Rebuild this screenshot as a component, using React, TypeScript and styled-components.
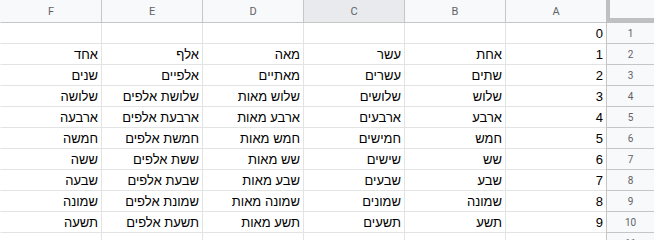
import React from "react";
import styled, { createGlobalStyle } from "styled-components";

const GlobalStyle = createGlobalStyle`
  html, body {
    margin: 0;
    padding: 0;
    background: #ffffff;
  }
  #root {
    width: 654px;
    height: 240px;
    overflow: hidden;
  }
`;

const Sheet = styled.div`
  direction: rtl;
  display: grid;
  grid-template-columns: 48px repeat(6, 101px);
  grid-auto-rows: 21px;
  grid-template-rows: 23px;
  width: 654px;
  background: #ffffff;
`;

const Corner = styled.div`
  background: #f8f9fa;
  border-left: 4px solid #c0c0c0;
  border-bottom: 5px solid #c0c0c0;
`;

const ColHeader = styled.div<{ $selected?: boolean; $edge?: boolean }>`
  display: flex;
  align-items: center;
  justify-content: center;
  background: ${(p) => (p.$selected ? "#e8eaed" : "#f8f9fa")};
  border-left: 1px solid ${(p) => (p.$edge ? "transparent" : "#c4c7c5")};
  border-bottom: 1px solid #c4c7c5;
  font-family: Roboto, "Liberation Sans", sans-serif;
  font-size: 11px;
  color: #5f6368;
`;

const RowHeader = styled.div`
  display: flex;
  align-items: center;
  justify-content: center;
  background: #f8f9fa;
  border-left: 1px solid #c4c7c5;
  border-bottom: 1px solid #c4c7c5;
  font-family: Roboto, "Liberation Sans", sans-serif;
  font-size: 10px;
  color: #5f6368;
`;

const Cell = styled.div<{ $edge?: boolean }>`
  display: flex;
  align-items: center;
  justify-content: flex-start;
  padding: 1px 3px 0;
  border-left: 1px solid ${(p) => (p.$edge ? "transparent" : "#e2e3e3")};
  border-bottom: 1px solid #e2e3e3;
  font-family: "Liberation Sans", Arial, sans-serif;
  font-size: 13px;
  color: #000000;
  white-space: nowrap;
  overflow: hidden;
`;

const columns = ["A", "B", "C", "D", "E", "F"];

const rows: string[][] = [
  ["0", "", "", "", "", ""],
  ["1", "אחת", "עשר", "מאה", "אלף", "אחד"],
  ["2", "שתים", "עשרים", "מאתיים", "אלפיים", "שנים"],
  ["3", "שלוש", "שלושים", "שלוש מאות", "שלושת אלפים", "שלושה"],
  ["4", "ארבע", "ארבעים", "ארבע מאות", "ארבעת אלפים", "ארבעה"],
  ["5", "חמש", "חמישים", "חמש מאות", "חמשת אלפים", "חמשה"],
  ["6", "שש", "שישים", "שש מאות", "ששת אלפים", "ששה"],
  ["7", "שבע", "שבעים", "שבע מאות", "שבעת אלפים", "שבעה"],
  ["8", "שמונה", "שמונים", "שמונה מאות", "שמונת אלפים", "שמונה"],
  ["9", "תשע", "תשעים", "תשע מאות", "תשעת אלפים", "תשעה"],
  ["", "", "", "", "", ""],
];

export default function App() {
  return (
    <>
      <GlobalStyle />
      <Sheet>
        <Corner />
        {columns.map((c, i) => (
          <ColHeader key={c} $selected={c === "C"} $edge={i === columns.length - 1}>
            {c}
          </ColHeader>
        ))}
        {rows.map((row, r) => (
          <React.Fragment key={r}>
            <RowHeader>{r + 1}</RowHeader>
            {row.map((v, i) => (
              <Cell key={i} $edge={i === row.length - 1}>
                {v}
              </Cell>
            ))}
          </React.Fragment>
        ))}
      </Sheet>
    </>
  );
}
